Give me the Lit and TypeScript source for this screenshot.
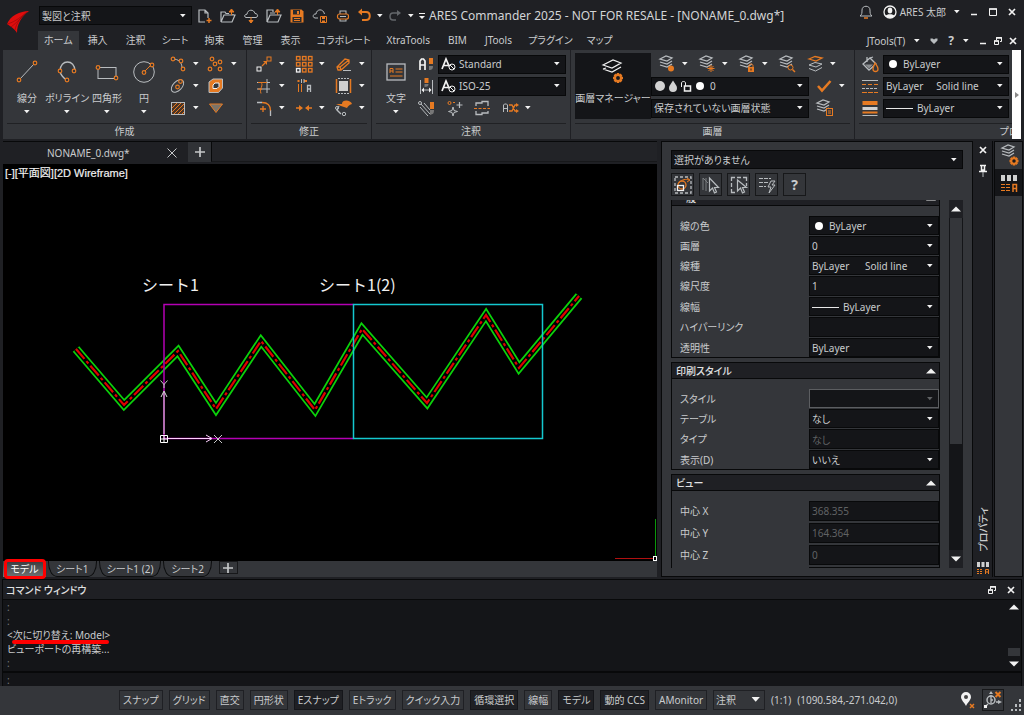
import { LitElement, html, svg, css, nothing, TemplateResult, SVGTemplateResult } from "lit";
import { customElement } from "lit/decorators.js";
import { classMap } from "lit/directives/class-map.js";

/* ---------- icon set: [width, height, shapes] ---------- */
const G = "#b8bcbf";
const O = "#e67a22";
const W = "#f2f2f2";
const D = "#34363a";

type Icon = [number, number, SVGTemplateResult];

const sheets = (x: number, y: number, top = G) => svg`
  <path d="M${x} ${y + 3}l6 -3 6 2 -5 3z" fill="none" stroke=${top} stroke-width="1.200" />
  <path d="M${x} ${y + 6}l7 2 5 -3M${x} ${y + 9}l7 2 5 -3" fill="none" stroke=${G} stroke-width="1.200" />
`;
const gear = (x: number, y: number, r: number) => svg`
  <path d="M${x} ${y - r}v${2 * r}M${x - r} ${y}h${2 * r}M${x - r * 0.7} ${y - r * 0.7}l${r * 1.4} ${r * 1.4}M${x + r * 0.7} ${y - r * 0.7}l${-r * 1.4} ${r * 1.4}" stroke=${O} stroke-width="2.500" />
  <circle cx=${x} cy=${y} r=${r - 1} fill=${O} />
  <circle cx=${x} cy=${y} r=${r / 2.6} fill="#1a1b1e" />
`;
const dot = (x: number, y: number) => svg`<circle cx=${x} cy=${y} r="1.800" fill=${D} stroke=${O} stroke-width="1.200" />`;

const icons: Record<string, Icon> = {
  logo: [24, 26, svg`<path d="M23 1C14 1 4 6 1 14c3 2 8 5 10 9 0-9 4-16 12-22z" fill="#e00d0d"/><path d="M1 14c5-1 12-5 20-12M5 17c4-3 9-8 15-14M9 20c1-5 4-11 10-16" stroke="#8c0a0a" fill="none" stroke-width=".6"/>`],
  newdoc: [16, 16, svg`<path d="M8 14H2V2h6l3 3v5M8 2v3h3" fill="none" stroke=${G} stroke-width="1.200"/><path d="M12 10v5M9.500 12.500h5" stroke=${O} stroke-width="1.500"/>`],
  open: [16, 16, svg`<path d="M1 14V4h4l1 1.500h3M1 14h11l3-7H4L1 14M13 7v-1" fill="none" stroke=${G} stroke-width="1.200"/><path d="M11.500 7V2M9 4l2.500-3L14 4z" stroke=${O} fill=${O}/>`],
  cloud: [16, 16, svg`<path d="M3 9.500C1 9 1 6.500 4 6.200 4.500 1 11 1 12 5.500c3 0 3.500 3.500 1 4z" fill="none" stroke=${G}/><path d="M8 9v6M6 12.500l2 2.500 2-2.500z" stroke=${O} fill=${O}/>`],
  openproj: [16, 16, svg`<path d="M1 14V2h6v2M1 14h11l3-7H4L1 14M4 5h5" fill="none" stroke=${G} stroke-width="1.200"/><path d="M11.500 7V2M9 4l2.500-3L14 4z" stroke=${O} fill=${O}/>`],
  save: [16, 16, svg`<path d="M1.500 1.500h11l2 2v11h-13z" fill=${O}/><path d="M4 2h7v4.500H4zM3.500 9h9v5h-9z" fill="#2a2b2e"/><path d="M8 3h2v3H8z" fill=${O}/><path d="M5 10.500h6M5 12.500h6" stroke=${O}/>`],
  cloudsave: [16, 16, svg`<path d="M6 10H3C0 9.500 1 5.500 4 6 4.500 1 11 0 12.500 6" fill="none" stroke=${G}/><path d="M8.500 8.500h6v6h-6z" fill="none" stroke=${O}/><path d="M10 9h3v2h-3zM10 12.500h3v2h-3z" fill=${O}/>`],
  globe: [16, 16, svg`<rect x="5" y="3" width="6" height="10" fill="none" stroke=${G}/><rect x="2.500" y="6" width="11" height="5" rx="2" fill="#222428" stroke=${O} stroke-width="1.200"/><path d="M5 8.500h6" stroke=${G}/>`],
  undo: [16, 16, svg`<path d="M5 4h5c5 0 5 8 0 8H6" fill="none" stroke=${O} stroke-width="2"/><path d="M2 4l4-3.500v7z" fill=${O}/>`],
  redo: [16, 16, svg`<path d="M11 5H6C2 5 2 12 6 12h3" fill="none" stroke="#63666a" stroke-width="1.500"/><path d="M14 5l-4-3v6z" fill="#63666a"/>`],
  customise: [8, 8, svg`<path d="M1 1.500h6" stroke=${W}/><path d="M1 4h6L4 7z" fill=${W}/>`],
  bell: [16, 16, svg`<path d="M2 12c2-1.500 2-3 2-6 0-5 8-5 8 0 0 3 0 4.500 2 6z" fill="none" stroke=${G}/><path d="M6 14h4" stroke=${O} stroke-width="1.500"/>`],
  user: [14, 14, svg`<circle cx="7" cy="7" r="6" fill="#1b1c1f" stroke=${W} stroke-width="1.300"/><ellipse cx="7" cy="5.500" rx="2.300" ry="3" fill=${W}/><path d="M2.500 11c1-2.500 8-2.500 9 0-2 2.500-7 2.500-9 0z" fill=${W}/>`],
  min: [10, 10, svg`<path d="M2 7.500h6" stroke=${W} stroke-width="1.500"/>`],
  max: [10, 10, svg`<path d="M1.500 2v6.500h7V2z" fill="none" stroke=${W}/><path d="M1 2h8" stroke=${W} stroke-width="1.500"/>`],
  close: [10, 10, svg`<path d="M2 2l6 6M8 2l-6 6" stroke=${W} stroke-width="1.700"/>`],
  restore: [10, 10, svg`<path d="M1.500 5v3.500h4V5zM3.500 4V1.500h5V5.500H7" fill="none" stroke=${W}/><path d="M1 5h5M3 2h6" stroke=${W} stroke-width="1.500"/>`],
  heart: [10, 8, svg`<path d="M1.500 1.500h2L5 2.500l1.500-1h2v2L5 7 1.500 3.500z" fill=${G}/>`],
  line: [26, 28, svg`<path d="M6 21L20 6" stroke=${G}/>${dot(5, 22)}${dot(21, 5)}`],
  polyline: [26, 28, svg`<path d="M6 13c0-12 15-12 15 0M6 13c0 3 4 8 7 9" fill="none" stroke=${G} stroke-width="1.300"/>${dot(6, 13)}${dot(20, 13)}${dot(13, 22)}`],
  rectangle: [26, 28, svg`<rect x="4" y="9.500" width="18" height="11" fill="none" stroke=${G}/>${dot(4, 9.5)}${dot(22, 20)}`],
  circle: [26, 28, svg`<circle cx="13" cy="14" r="10.300" fill="none" stroke=${G}/><path d="M13 14l7-7" stroke=${O}/>${dot(13, 14.5)}${dot(21, 7)}`],
  arc: [20, 18, svg`<path d="M5 4c5 0 9 3 9 9" fill="none" stroke=${G}/>${dot(5, 4)}${dot(13, 6)}${dot(15, 14)}`],
  points: [20, 18, svg`${dot(6, 4)}${dot(14, 7)}${dot(9, 9)}${dot(4, 14)}${dot(14, 14)}`],
  ellipse: [20, 18, svg`<ellipse cx="9.500" cy="9" rx="7.500" ry="4.500" transform="rotate(-45 9.500 9)" fill="none" stroke=${G}/>${dot(9.5, 10)}${dot(12.5, 4.5)}`],
  region: [20, 18, svg`<path d="M3 15.500V5l4-3h9.500v9l-4 4.500z" fill=${O} stroke=${G}/><path d="M7 11.500V8l2-2h4v3.500l-2 2z" fill="${D}" stroke=${W}/>`],
  hatch: [20, 18, svg`<rect x="3.500" y="3.500" width="13" height="12" fill="#4b3425" stroke=${G}/><path d="M4 9l5-5M4 13l9-9M6 15L16 5M10 15l6-6M14 15l2-2" stroke=${O}/>`],
  triangle: [20, 18, svg`<path d="M3.500 5h13L10 13.500z" fill="#7c7468" stroke=${O}/>`],
  move: [20, 18, svg`<rect x="3" y="12" width="4" height="4" fill="none" stroke=${W}/><rect x="13" y="2" width="4" height="4" fill="none" stroke=${O}/><path d="M8 11l3-3" stroke=${O} stroke-width="1.300"/><path d="M13 6v4L9 6z" fill=${O}/>`],
  pattern: [20, 18, svg`${[0, 1, 2].map((r) => [0, 1, 2].map((c) => svg`<rect x=${2.5 + c * 6} y=${1.5 + r * 6} width="3.500" height="3.500" fill="none" stroke=${r === 2 && c === 0 ? W : O} stroke-width="1.300"/>`))}`],
  eraser: [20, 18, svg`<path d="M3 12l8-8 4 1v3l-8 7H4zM7 15l-1-3-3 0M6 12l9-7" fill="none" stroke=${O} stroke-width="1.300"/><path d="M9 15.500h8" stroke=${G}/>`],
  trim: [20, 18, svg`<path d="M3 5.500h13M3 12h13M13 2v14" stroke=${G} fill="none"/><path d="M4 5.500h9M7 5.500c3 3-2 6 0 11M4 12h4" stroke=${O} fill="none"/>`],
  stretchA: [20, 18, svg`<path d="M3.500 4h2M10 4h3" stroke=${O} stroke-width="2"/><path d="M7.500 2v4M10 2v4" stroke=${G}/><path d="M4.500 7v8M7.500 7v8" stroke=${O}/><path d="M13.500 15V8.500h3V15M13.500 12h3" stroke=${G} fill="none" stroke-width="1.300"/>`],
  scale: [20, 18, svg`<rect x="5" y="4" width="9" height="10" fill="#cfcfcf"/><path d="M2.500 2v14M16.500 2v14" stroke=${O} stroke-width="1.500"/><path d="M4 1.500h11M4 16.500h11" stroke=${G} stroke-dasharray="2 1"/>`],
  fillet: [20, 18, svg`<path d="M3 3.500h5M16.500 11v6" stroke=${G} fill="none" stroke-width="1.300"/><path d="M8 3.500c6 0 8.500 3 8.500 8M9 7v6M6 10h6" stroke=${O} fill="none" stroke-width="1.300"/>`],
  join: [20, 18, svg`<path d="M2 9h5M18 9h-5" stroke=${O} stroke-width="1.500"/><path d="M5 6l4 3-4 3zM15 6l-4 3 4 3z" fill=${O}/>`],
  explode: [20, 18, svg`<path d="M8 5c0-5 9-4 10 0-3 1-4 2-5 4L7 7 2 5z" fill=${O}/><path d="M5 7l-2 4 4 4" fill="none" stroke=${G} stroke-width="1.300"/><circle cx="10" cy="15" r="1.700" fill="none" stroke=${G}/><circle cx="3" cy="9" r="1.500" fill="none" stroke=${G}/>`],
  text: [22, 22, svg`<rect x="2" y="3" width="18" height="16" fill="none" stroke=${G} stroke-width="1.300"/><path d="M5 12V7.500h3V12M5 10h3M10.500 8h7M10.500 11h7M5 15h12.500" stroke=${O} fill="none"/>`],
  textstyle: [20, 18, svg`<path d="M4 15V6l1.500-2h2L9 6v9M4 10h5" stroke=${W} fill="none" stroke-width="1.700"/><rect x="13" y="3" width="4" height="6" fill=${O}/><path d="M13 11h4c0 3-1 4-4 4z" fill="#777"/>`],
  dimstyle: [20, 18, svg`<path d="M4.500 3v14M16.500 3v14M7 13h7" stroke=${G} fill="none"/><path d="M8 10.500L5.500 13 8 15.500zM13 10.500l2.500 2.500-2.500 2.500z" fill=${W}/><rect x="8.500" y="1" width="4" height="5" fill=${O}/><path d="M8.500 7h4c0 2-1 3-4 3z" fill="#777"/>`],
  mlstyle: [20, 18, svg`<path d="M5 5l9 10M8 4l6 7M4 8l8 9" stroke=${G}/><circle cx="4" cy="4" r="1.500" fill="none" stroke=${G}/><rect x="14" y="3" width="4" height="7" fill=${O}/><path d="M14 11h4c0 4-1 4-4 5z" fill="#777"/>`],
  spark: [20, 18, svg`<circle cx="5.500" cy="4" r="1.500" fill="none" stroke=${O}/><path d="M9 3.500h2" stroke=${O}/><path d="M12.500 6h6M15.500 3v6" stroke=${G} stroke-width="1.200"/><path d="M9 8l1 3.500 3.500 1-3.500 1-1 3.500-1-3.500-3.500-1 3.500-1z" fill=${D} stroke=${G}/>`],
  section: [20, 18, svg`<path d="M4 7V4h6V2.500h6V7M4 12v3.500h6V14h6v-2" fill="none" stroke=${G} stroke-width="1.300"/><path d="M2 9.500h16" stroke=${O} stroke-dasharray="3 1.500"/>`],
  retext: [20, 18, svg`<path d="M3.500 13V6l1-1h2l1 1v7M3.500 9.500h4" stroke=${G} fill="none"/><path d="M9 6h3l3 6h2M9 12h3l3-6h2" stroke=${O} fill="none" stroke-width="1.300"/><path d="M16 4v4l3-2zM16 10v4l3-2z" fill=${O}/>`],
  abar: [15, 14, svg`<path d="M1 12L5 2l3.500 8M3 8.500h4" stroke=${W} fill="none" stroke-width="1.700"/><circle cx="11" cy="10" r="3" fill="#141518" stroke=${W}/><path d="M9 8l4 4" stroke=${W}/>`],
  layermgr: [26, 30, svg`<path d="M3 8l10-5 8 3-9 5zM3 12l9 3 9-5M3 12l3-1" fill="none" stroke=${W} stroke-width="1.200"/>${gear(18, 21, 5)}`],
  laygear: [26, 26, svg`${sheets(6, 2)}${gear(18, 18, 4.5)}`],
  laydot: [20, 18, svg`${sheets(3, 1)}<circle cx="14" cy="13.500" r="3" fill=${O}/>`],
  laysun: [20, 18, svg`${sheets(3, 1)}<path d="M14 10v7M10.500 13.500h7M11.500 11l5 5M16.500 11l-5 5" stroke=${O}/>`],
  laylock: [20, 18, svg`${sheets(3, 1)}<path d="M12 13v-2.500c0-2 4-2 4 0V13" fill="none" stroke=${O}/><rect x="11" y="12" width="6" height="5" fill=${O}/><path d="M14 13.500v2" stroke="#222"/>`],
  laysearch: [20, 18, svg`${sheets(3, 1)}<circle cx="13.500" cy="12.500" r="2.500" fill=${D} stroke=${O}/><path d="M15.500 14.500L18 17" stroke=${O} stroke-width="1.500"/>`],
  layiso: [20, 18, svg`<path d="M4 4l6-2.500 7 1.500-6 3z" fill=${D} stroke=${O} stroke-width="1.300"/><path d="M4 10l6-2.500 7 1.500-6 3zM4 13.500l6.500 2.500 6.500-3.500" fill="none" stroke=${G}/>`],
  laystate: [20, 18, svg`${sheets(3, 1)}<rect x="12.500" y="9.500" width="6" height="7" fill=${D} stroke=${O}/><path d="M14 12h3M14 14h3" stroke=${O}/>`],
  check: [18, 16, svg`<path d="M3 8l4 4.500L15.500 3" fill="none" stroke=${O} stroke-width="2.500"/>`],
  bullet: [14, 12, svg`<circle cx="7" cy="6" r="4" fill="#fff"/>`],
  bulletgrey: [12, 12, svg`<circle cx="6" cy="6" r="5" fill="#d2d2d2"/>`],
  drop: [12, 12, svg`<path d="M6 .5C8 4 10 5.500 10 8a4 4 0 0 1-8 0c0-2.500 2-4 4-7.500z" fill="#d2d2d2"/>`],
  unlock: [12, 12, svg`<path d="M1.500 7V3c0-2 4-2 4 0v3" fill="none" stroke=${W}/><rect x="4.500" y="6" width="6" height="5" fill="none" stroke=${W} stroke-width="1.500"/>`],
  bucket: [20, 18, svg`<path d="M3 9l7-6 6 6-7 6zM7 2v5M10 3l3-1" fill="none" stroke=${G} stroke-width="1.300"/><path d="M5 9.500h8l-4 4z" fill="#8c8f92"/><path d="M15 8c2 3 3 4 3 6a2.500 2.500 0 0 1-5 0c0-2 1-3 2-6z" fill=${D} stroke=${O} stroke-width="1.300"/>`],
  linetype: [20, 18, svg`<path d="M2 3.500h16" stroke=${G}/><path d="M2 7.500h16" stroke=${O} stroke-dasharray="4 2"/><path d="M2 11.500h16" stroke=${G} stroke-dasharray="3 1"/><path d="M2 15.500h16" stroke=${O} stroke-dasharray="5 1"/>`],
  lineweight: [20, 18, svg`<rect x="2.500" y="2" width="15" height="4" fill=${O}/><rect x="2.500" y="8" width="15" height="3" fill="#d0d0d0"/><rect x="2.500" y="12.500" width="15" height="2" fill=${O}/><path d="M2.500 16.500h15" stroke=${G}/>`],
  dash: [28, 4, svg`<path d="M0 2.500h27" stroke="#e8e8e8"/>`],
  x: [12, 12, svg`<path d="M1.500 1.500l9 9M10.500 1.500l-9 9" stroke="#c5c7c9"/>`],
  plus: [12, 12, svg`<path d="M6 1v10M1 6h10" stroke="#c5c7c9" stroke-width="1.700"/>`],
  selcycle: [20, 20, svg`<rect x="2" y="2" width="16" height="16" fill="none" stroke=${G} stroke-width="1.300" stroke-dasharray="3 2"/><circle cx="9" cy="10" r="4" fill="none" stroke=${O} stroke-width="1.300"/><path d="M6 8c3-4 7-4 10-3M14 3l3 2-3 2" stroke=${O} fill="none"/><rect x="4.500" y="10.500" width="6" height="5" fill="none" stroke=${W} stroke-width="1.300"/>`],
  selall: [20, 20, svg`<path d="M2 3v12M5 3v13M2 3l5 5" stroke="#7b7e81" fill="none"/><path d="M8.500 3v13l3-3 2 5 2-1-2-4.500h4z" fill=${D} stroke=${G} stroke-width="1.200"/>`],
  selbox: [20, 20, svg`<path d="M6 2.500H2.500V6M2.500 8v4M2.500 14v3.500H6M8 2.500h4M14 2.500h3.500V6M17.500 8v3" fill="none" stroke=${G} stroke-width="1.300"/><path d="M8.500 5v11l3-3 2 5 2-1-2-4.500h4z" fill=${D} stroke=${G} stroke-width="1.200"/>`],
  selquick: [20, 20, svg`<path d="M2 3.500h12M2 7.500h9M2 11.500h7" stroke=${G} stroke-dasharray="4 1" stroke-width="1.200"/><path d="M14 6l-3 6h3l-2 6 6-8h-3l3-4z" fill="none" stroke=${G}/>`],
  pin: [12, 14, svg`<path d="M3 1.500h6M4.500 2v4h3V2M2 7.500h8" stroke=${W} stroke-width="1.500" fill="none"/><path d="M6 8v5" stroke=${G}/>`],
  propbar: [20, 20, svg`<rect x="2" y="2" width="4" height="6" fill="#cfcfcf"/><rect x="8" y="2" width="4" height="6" fill="#cfcfcf"/><rect x="14" y="2" width="4" height="6" fill="#cfcfcf"/><path d="M2 11.500h9M2 14.500h9M2 17.500h9" stroke=${O} stroke-dasharray="4 1"/><path d="M14 19v-7.500h3.500V19M14 15.500h3.500" fill="none" stroke=${O} stroke-width="1.500"/>`],
  propmini: [14, 14, svg`<path d="M1 1h3v5H1zM5.500 1h3v5h-3zM10 1h3v5h-3z" fill="#cfcfcf"/><path d="M1 8.500h6M1 10.500h6M1 12.500h6" stroke=${O} stroke-dasharray="2 1"/><path d="M9.500 13V8.500h3V13M9.500 11h3" fill="none" stroke=${O}/>`],
  up: [10, 6, svg`<path d="M0 5.500L5 .5l5 5z" fill=${W}/>`],
  down: [10, 6, svg`<path d="M0 .5l5 5 5-5z" fill=${W}/>`],
  chev: [4, 6, svg`<path d="M0 0l4 3-4 3z" fill="#8a8a8a"/>`],
  geo: [18, 18, svg`<path d="M8 1a5 5 0 0 1 5 5c0 3-3 5-5 9-2-4-5-6-5-9a5 5 0 0 1 5-5z" fill=${W}/><circle cx="8" cy="6" r="2" fill="#444"/><path d="M12 13l4 4M16 13l-4 4" stroke=${O} stroke-width="1.500"/>`],
  ccs: [20, 20, svg`<circle cx="8" cy="10" r="4" fill="none" stroke=${G} stroke-width="1.500"/><path d="M8 5v8M8 10h2M13 12h4M5 14l-2 2" stroke=${G} stroke-width="1.300"/><path d="M6 4l2-3 2 3zM15 10l4 2-4 2z" fill=${G}/><rect x="1" y="15" width="3" height="3" fill=${W}/><path d="M12.500 2l5 5M17.500 2l-5 5" stroke=${O} stroke-width="2"/>`],
  grip: [12, 12, svg`<path d="M10 0v3M10 5v3M10 10v2M6 5v3M6 10v2M2 10v2" stroke=${G} stroke-width="2"/>`],
};

const icon = (name: string) => {
  const [w, h, shapes] = icons[name];
  return html`<svg class="icon" width=${w} height=${h} viewBox="0 0 ${w} ${h}" aria-hidden="true">${shapes}</svg>`;
};
const caret = html`<svg class="caret" width="6" height="4" viewBox="0 0 6 4" aria-hidden="true"><path d="M0 0h5.600L2.800 3.200z" fill="currentColor"/></svg>`;

/* ---------- data ---------- */
const menuTabs = ["ホーム", "挿入", "注釈", "シート", "拘束", "管理", "表示", "コラボレート", "XtraTools", "BIM", "JTools", "プラグイン", "マップ"];
const quickTools: [string, string][] = [["newdoc", "新規"], ["open", "開く"], ["cloud", "クラウド"], ["openproj", "プロジェクト"], ["save", "保存"], ["cloudsave", "クラウド保存"], ["globe", "印刷"]];
const sheetTabs = ["シート1", "シート1 (2)", "シート2"];
const statusButtons: [string, boolean][] = [
  ["スナップ", false], ["グリッド", false], ["直交", false], ["円形状", false], ["Eスナップ", true], ["Eトラック", false],
  ["クイック入力", false], ["循環選択", true], ["線幅", false], ["モデル", true], ["動的 CCS", true], ["AMonitor", false],
];
const path: [number, number][] = [[73, 185], [121, 241], [175, 187], [213, 245], [258, 177], [312, 246], [359, 165], [424, 239], [483, 151], [516, 204], [576, 132]];

interface Row {
  label: string;
  value: string;
  kind: "select" | "input";
  lead?: string;
  disabled?: boolean;
}
interface Section {
  title: string;
  rows: Row[];
  roomy?: boolean;
}
const sections: Section[] = [
  {
    title: "一般",
    rows: [
      { label: "線の色", value: "ByLayer", kind: "select", lead: "bullet" },
      { label: "画層", value: "0", kind: "select" },
      { label: "線種", value: "ByLayer\u00a0\u00a0\u00a0\u00a0\u00a0\u00a0Solid line", kind: "select" },
      { label: "線尺度", value: "1", kind: "input" },
      { label: "線幅", value: "ByLayer", kind: "select", lead: "dash" },
      { label: "ハイパーリンク", value: "", kind: "input" },
      { label: "透明性", value: "ByLayer", kind: "select" },
    ],
  },
  {
    title: "印刷スタイル",
    rows: [
      { label: "スタイル", value: "", kind: "select", disabled: true },
      { label: "テーブル", value: "なし", kind: "select" },
      { label: "タイプ", value: "なし", kind: "input", disabled: true },
      { label: "表示(D)", value: "いいえ", kind: "select" },
    ],
  },
  {
    title: "ビュー",
    roomy: true,
    rows: [
      { label: "中心 X", value: "368.355", kind: "input", disabled: true },
      { label: "中心 Y", value: "164.364", kind: "input", disabled: true },
      { label: "中心 Z", value: "0", kind: "input", disabled: true },
      { label: "", value: "", kind: "input", disabled: true },
    ],
  },
];

@customElement("app-root")
export class AppRoot extends LitElement {
  static styles = css`
    :host {
      display: flex;
      flex-direction: column;
      height: 100vh;
      overflow: hidden;
      background: #1f2024;
      color: #c9cbcd;
      font: 10px/14px "Noto Sans", "Noto Sans CJK JP", sans-serif;
      font-feature-settings: "palt";
      --ribbon: #34363a;
      --bar: #1f2024;
      --field: #141518;
      --edge: #08090a;
    }
    * { box-sizing: border-box; }
    button, select, input {
      font: inherit;
      font-feature-settings: inherit;
      color: inherit;
      background: none;
      border: 0;
      padding: 0;
      margin: 0;
      min-width: 0;
    }
    a { color: inherit; text-decoration: none; }
    .icon, .caret { display: block; flex: none; }
    .caret { color: #f2f2f2; }

    /* title and menu */
    .top { display: grid; grid-template-columns: 38px 1fr; height: 50px; flex: none; }
    .logo { padding: 10px 0 0 6px; }
    .title { display: flex; align-items: center; height: 31px; padding: 0 3px 0 1px; }
    .workspace { width: 153px; margin-right: 1px; }
    .quick { display: flex; align-items: center; }
    .quick button { width: 23px; height: 22px; display: flex; align-items: center; justify-content: center; }
    .quick button.step { width: 20px; }
    .quick button.slim { width: 11px; }
    .doc { font-size: 12px; line-height: 18px; font-weight: 400; margin: 0 0 0 2px; color: #d2d4d6; white-space: nowrap; flex: 1; }
    .account { display: flex; align-items: center; align-self: flex-start; height: 24px; }
    .account .user { display: flex; align-items: center; gap: 3px; margin: 0 4px 0 9px; }
    .account .user .caret { margin-left: 5px; }
    .account .win { width: 19px; height: 20px; display: flex; align-items: center; justify-content: center; }
    .menu { display: flex; height: 19px; align-items: stretch; padding-right: 6px; }
    .menu a { padding: 2px 9px 0; white-space: nowrap; }
    .menu a.on { background: var(--ribbon); padding: 2px 6px 0; }
    .menu a.kana { padding: 2px 7px 0; }
    .menu .extra { margin-left: auto; display: flex; align-items: center; gap: 9px; }
    .menu .extra button { display: flex; align-items: center; gap: 9px; }
    .menu .help { font-weight: 700; font-size: 12px; }
    .menu .mdi { display: flex; gap: 5px; }

    /* ribbon */
    .ribbon { display: flex; height: 89px; flex: none; margin: 0 3px; background: var(--ribbon); }
    .panel { display: flex; flex-direction: column; padding: 3px 4px 0; border-right: 1px solid #1f2024; flex: none; }
    .panel .body { display: flex; height: 70px; }
    .panel h2 { margin: 0; border-top: 1px solid #202124; font-size: 10px; line-height: 15px; font-weight: 400; text-align: center; }
    .panel.last { flex: 1; min-width: 0; overflow: hidden; border: 0; padding: 3px 3px 0 4px; }
    .panel.last h2 { width: 326px; }
    .big { width: 40px; height: 66px; display: flex; flex-direction: column; align-items: center; white-space: nowrap; }
    .big .pic { height: 38px; display: flex; align-items: center; }
    .big .caret { margin-top: 5px; }
    .big.slim { width: 34px; }
    .big.dark { background: var(--field); width: 76px; }
    .tools { display: grid; grid-auto-rows: 22px; align-content: start; }
    .tools.create { grid-template-columns: 38px 38px; margin-left: 5px; }
    .tools.modify { grid-template-columns: 40px 40px 35px; padding-left: 1px; }
    .cell { display: flex; align-items: center; }
    .cell button { width: 24px; height: 22px; display: flex; align-items: center; justify-content: center; }
    .cell .caret { margin-left: 3px; }
    .notes { display: grid; grid-template-columns: 24px 128px; grid-auto-rows: 22px; align-items: center; margin-left: -2px; }
    .layers { display: grid; grid-template-columns: 158px 38px; grid-auto-rows: 22px; align-items: center; column-gap: 3px; }
    .layers .wide { grid-column: 1 / 3; }
    .row { display: flex; align-items: center; }
    .row .cell { width: 40px; padding-left: 4px; }
    .row .cell.narrow { width: 28px; }
    .props { flex: 1; display: grid; grid-template-columns: 24px minmax(0, 1fr); grid-auto-rows: 22px; align-items: center; }
    .props > .icon { margin-left: 1px; }
    .more { width: 9px; background: #fff; display: flex; align-items: center; justify-content: center; }

    /* fields */
    .field { display: flex; align-items: center; height: 19px; background: var(--field); border: 1px solid var(--edge); padding: 0 2px; min-width: 0; gap: 1px; }
    .field select, .field input { flex: 1; height: 17px; appearance: none; outline: none; width: 20px; }
    .field .icon + select { padding-left: 2px; }
    .field .caret { margin: 0 3px 0 -10px; pointer-events: none; }
    .field.status { width: 52px; height: 20px; background: none; border-color: #1f2024; }
    .field.status .caret { transform: scale(1.500); }

    /* work area */
    .work { flex: 1; min-height: 0; display: flex; margin-top: 2px; }
    .drawing { flex: 1; min-width: 0; display: flex; flex-direction: column; margin: 0 3px; }
    .docs { display: flex; height: 23px; flex: none; border-top: 1px solid var(--edge); }
    .docs .tab { width: 185px; display: flex; align-items: center; padding: 0 10px 0 44px; justify-content: space-between; }
    .docs .add { width: 23px; background: #303236; display: flex; align-items: center; justify-content: center; height: 20px; }
    .docs .rest { flex: 1; border-left: 1px solid var(--edge); border-bottom: 1px solid #17181a; background: #222327; height: 20px; }
    .canvas { position: relative; flex: 1; min-height: 0; background: #000; }
    .scene { display: block; width: 100%; height: 100%; }
    .scene text { font-feature-settings: normal; }
    .corner { position: absolute; right: 0; bottom: 0; display: block; }
    .sheets { display: flex; height: 16px; flex: none; background: var(--ribbon); align-items: stretch; }
    .sheets .model { position: relative; width: 43px; text-align: center; color: #fff; background: linear-gradient(#3a3b3e, #707274); }
    .sheets .model::after { content: ""; position: absolute; inset: -2px 0 -2px 1px; border: 3px solid #f00; border-radius: 4px; }
    .sheets .sheet { border: solid #0c0d0e; border-width: 0 1px 1px; border-radius: 0 0 9px 9px / 0 0 15px 15px; padding: 0 7px; margin-left: 2px; white-space: nowrap; }
    .sheets .new { display: flex; align-items: center; justify-content: center; width: 19px; height: 13px; margin-left: 7px; border: 1px solid #17181a; }

    /* properties */
    .properties { width: 312px; flex: none; background: var(--ribbon); border: 1px solid var(--edge); display: flex; flex-direction: column; padding: 8px 9px; margin-left: 1px; }
    .picks { display: flex; gap: 5px; margin: 4px 0 4px; }
    .picks button { width: 23px; height: 23px; border: 1px solid #17181a; display: flex; align-items: center; justify-content: center; font-weight: 700; font-size: 14px; }
    .listing { flex: 1; min-height: 0; display: flex; justify-content: space-between; }
    .scroll { width: 269px; overflow: auto; scrollbar-width: none; }
    .section { border: 1px solid var(--edge); margin-bottom: 4px; }
    .section h3 { margin: 0; height: 16px; display: flex; align-items: center; justify-content: space-between; background: var(--bar); border-bottom: 1px solid var(--edge); padding: 0 3px 0 4px; font-size: 10px; font-weight: 500; color: #e0e1e2; }
    .rows { display: grid; grid-template-columns: 1fr 130px; row-gap: 1px; padding: 10px 0 0 8px; align-items: center; }
    .rows.roomy { row-gap: 2px; }
    .rows .field { height: 19px; }
    .rows .field.text { height: 20px; }
    .rows .field.off { color: #606264; }
    .rows .field.off .caret { color: #606264; }
    .rows .field.framed { border-color: #5c5e61; }
    .lane { width: 14px; background: var(--field); display: flex; flex-direction: column; align-items: center; }
    .lane .end { height: 18px; display: flex; align-items: center; background: var(--bar); width: 14px; justify-content: center; }
    .lane .thumb { width: 12px; background: var(--ribbon); flex: 68; }
    .lane .rest { flex: 32; }
    .spine { width: 20px; flex: none; background: var(--bar); display: flex; flex-direction: column; align-items: center; gap: 9px; padding: 4px 0 2px; border-right: 1px solid var(--edge); }
    .spine span { margin-top: auto; writing-mode: vertical-rl; text-orientation: sideways; transform: rotate(180deg); font-weight: 500; }
    .dock { width: 29px; flex: none; background: var(--ribbon); border: 1px solid var(--edge); margin: 0 1px 0 1px; }
    .dock button { display: flex; width: 27px; height: 27px; align-items: center; justify-content: center; }
    .dock button.on { background: var(--field); }

    /* command window */
    .command { flex: none; margin: 2px 2px 0; border: 1px solid var(--edge); background: var(--field); border-bottom: 0; }
    .command h2 { display: flex; align-items: center; margin: 0; height: 20px; padding: 0 5px 0 3px; gap: 9px; font-size: 10px; font-weight: 500; color: #e0e1e2; background: var(--bar); border-bottom: 1px solid var(--edge); }
    .command h2 span { flex: 1; }
    .output { display: flex; height: 73px; border-bottom: 2px solid var(--edge); }
    .lines { flex: 1; padding: 0 4px; }
    .lines p { margin: 0; }
    .lines .mark { color: #77797b; }
    .lines .noted { position: relative; display: inline-block; }
    .lines .noted::after { content: ""; position: absolute; left: 5px; right: 1px; bottom: -2px; height: 4px; border-radius: 2px; background: #f00; }
    .feed { width: 14px; display: flex; flex-direction: column; align-items: center; padding: 4px 0; }
    .feed .thumb { width: 12px; height: 8px; margin: auto 0 5px; background: var(--ribbon); }
    .prompt { display: flex; height: 13px; padding: 0 4px; align-items: center; color: #77797b; }
    .prompt input { flex: 1; height: 12px; outline: none; }

    /* status */
    .status-bar { flex: none; height: 29px; background: var(--ribbon); display: flex; align-items: center; gap: 6px; padding: 0 2px 2px 119px; white-space: nowrap; }
    .status-bar .toggle { height: 20px; padding: 0 3px; border: 1px solid #1f2024; }
    .status-bar .toggle.on { background: var(--bar); border-color: #15161a; }
    .status-bar .ends { margin-left: auto; display: flex; align-items: center; gap: 6px; }
    .status-bar .framed { border: 1px solid #17181a; }
    .status-bar .grip { align-self: flex-end; }
  `;

  firstUpdated() {
    const list = this.renderRoot.querySelector(".scroll");
    if (list) list.scrollTop = 11;
  }

  private pick(value: string, name: string, lead: string[] = [], cls = "") {
    return html`<div class="field ${cls}">
      ${lead.map(icon)}<select aria-label=${name}><option>${value}</option></select>${caret}
    </div>`;
  }

  private cell(name: string, drop = true, cls = "") {
    return html`<div class="cell ${cls}"><button aria-label=${name}>${icon(name)}</button>${drop ? caret : nothing}</div>`;
  }

  private big(name: string, label: string, cls = "", drop = true) {
    return html`<button class="big ${cls}"><span class="pic">${icon(name)}</span>${label}${drop ? caret : nothing}</button>`;
  }

  private panel(title: string, body: TemplateResult, cls = "") {
    return html`<section class="panel ${cls}"><div class="body">${body}</div><h2>${title}</h2></section>`;
  }

  private header() {
    return html`<header class="top">
      <div class="logo">${icon("logo")}</div>
      <div>
        <div class="title">
          <div class="workspace">${this.pick("製図と注釈", "ワークスペース")}</div>
          <div class="quick">
            ${quickTools.map(([n, l]) => html`<button aria-label=${l}>${icon(n)}</button>`)}
            <button class="step" aria-label="元に戻す">${icon("undo")}</button><button class="slim" aria-label="履歴">${caret}</button>
            <button class="step" aria-label="やり直し">${icon("redo")}</button><button class="slim" aria-label="履歴">${caret}</button>
            <button class="slim" aria-label="カスタマイズ">${icon("customise")}</button>
          </div>
          <h1 class="doc">ARES Commander 2025 - NOT FOR RESALE - [NONAME_0.dwg*]</h1>
          <div class="account">
            <button aria-label="通知">${icon("bell")}</button>
            <button class="user">${icon("user")}ARES 太郎 ${caret}</button>
            ${["min", "max", "close"].map((n) => html`<button class="win" aria-label=${n}>${icon(n)}</button>`)}
          </div>
        </div>
        <nav class="menu">
          ${menuTabs.map((t, i) => html`<a href="#" class=${classMap({ on: i === 0, kana: i > 0 && /^[ァ-ー]+$/.test(t) })}>${t}</a>`)}
          <div class="extra">
            <button>JTools(T) ${caret}</button>${icon("heart")}
            <button><span class="help">?</span>${caret}</button>
            <div class="mdi">${["min", "restore", "close"].map((n) => html`<button aria-label=${n}>${icon(n)}</button>`)}</div>
          </div>
        </nav>
      </div>
    </header>`;
  }

  private ribbon() {
    const create = html`
      ${this.big("line", "線分")}${this.big("polyline", "ポリライン")}${this.big("rectangle", "四角形")}${this.big("circle", "円", "slim")}
      <div class="tools create">
        ${this.cell("arc")}${this.cell("points")}${this.cell("ellipse")}${this.cell("region", false)}${this.cell("hatch")}${this.cell("triangle", false)}
      </div>`;
    const modify = html`<div class="tools modify">
      ${this.cell("move")}${this.cell("pattern")}${this.cell("eraser")}
      ${this.cell("trim")}${this.cell("stretchA", false)}${this.cell("scale")}
      ${this.cell("fillet")}${this.cell("join")}${this.cell("explode")}
    </div>`;
    const notes = html`
      ${this.big("text", "文字")}
      <div class="notes">
        ${this.cell("textstyle", false)}${this.pick("Standard", "文字スタイル", ["abar"])}
        ${this.cell("dimstyle", false)}${this.pick("ISO-25", "寸法スタイル", ["abar"])}
        ${this.cell("mlstyle", false)}
        <div class="row">${this.cell("spark", false, "narrow")}${this.cell("section", false, "narrow")}${this.cell("retext")}</div>
      </div>`;
    const layers = html`
      ${this.big("layermgr", "画層マネージャー", "dark", false)}
      <div class="layers">
        <div class="row wide">${this.cell("laydot")}${this.cell("laysun")}${this.cell("laylock")}${this.cell("laysearch", false, "narrow")}${this.cell("layiso")}</div>
        ${this.pick("0", "画層", ["bulletgrey", "drop", "unlock", "bullet"])}${this.cell("check")}
        ${this.pick("保存されていない画層状態", "画層状態")}${this.cell("laystate", false)}
      </div>`;
    const props = html`<div class="props">
      ${icon("bucket")}${this.pick("ByLayer", "線の色", ["bullet"])}
      ${icon("linetype")}${this.pick("ByLayer\u00a0\u00a0\u00a0\u00a0\u00a0Solid line", "線種")}
      ${icon("lineweight")}${this.pick("ByLayer", "線幅", ["dash"])}
    </div>`;
    return html`<div class="ribbon">
      ${this.panel("作成", create)}${this.panel("修正", modify)}${this.panel("注釈", notes)}${this.panel("画層", layers)}${this.panel("プロパティ", props, "last")}
      <button class="more" aria-label="次へ">${icon("chev")}</button>
    </div>`;
  }

  private scene() {
    const pts = path.map((p) => p.join(",")).join(" ");
    return html`
      <svg class="scene">
        <g fill="none">
          <polyline points=${pts} stroke="#0bd20b" stroke-width="8.500" stroke-miterlimit="8" />
          <polyline points=${pts} stroke="#000" stroke-width="5" stroke-miterlimit="8" />
          <polyline points=${pts} stroke="#e00000" stroke-width="2.200" stroke-dasharray="13 3 3 3" />
          <path d="M350.500 140.500H161V274.500H350.500" stroke="#b400b4" stroke-width="1.500" />
          <rect x="350.500" y="140.500" width="189" height="134" stroke="#14c8cf" stroke-width="1.500" />
          <path d="M161 270V228M158 233l3 -6 3 6" stroke="#d8d8d8" />
          <path d="M165 274.500h43M203 271l6 3.500-6 3.500" stroke="#ffd0ff" />
          <path d="M157.500 271.500h7v7h-7zM161 271v7M158 275h7" stroke="#fff" />
          <path d="M157.500 216.500l3.500 4 3.500-4M161 220v4M211 271l8 8M219 271l-8 8" stroke="#c8c8c8" />
        </g>
        <text x="2" y="13" fill="#f0f0f0" font-size="11" font-family="Liberation Sans, Noto Sans CJK JP, sans-serif" stroke="#f0f0f0" stroke-width=".2">[-][平面図][2D Wireframe]</text>
        <text x="139" y="127" fill="#f0f0f0" font-size="16" font-family="Noto Sans CJK JP, sans-serif">シート1</text>
        <text x="316" y="127" fill="#f0f0f0" font-size="16" font-family="Noto Sans CJK JP, sans-serif">シート1(2)</text>
      </svg>
      <svg class="corner" width="44" height="44" viewBox="0 0 44 44">
        <path d="M42.500 2v38" stroke="#0a960a" /><path d="M2 41.500h38" stroke="#b01010" />
        <rect x="40.500" y="39.500" width="3" height="4" fill="none" stroke="#fff" />
      </svg>`;
  }

  private propertyRow(row: Row, id: string) {
    const cls = classMap({ field: true, text: row.kind === "input", off: !!row.disabled, framed: !!row.disabled && row.kind === "select" });
    return html`<label for=${id}>${row.label}</label>
      <div class=${cls}>
        ${row.lead ? icon(row.lead) : nothing}
        ${row.kind === "select"
          ? html`<select id=${id}><option>${row.value}</option></select>${caret}`
          : html`<input id=${id} .value=${row.value} ?readonly=${!!row.disabled} />`}
      </div>`;
  }

  private properties() {
    return html`<aside class="properties">
        ${this.pick("選択がありません", "選択")}
        <div class="picks">
          ${["selcycle", "selall", "selbox", "selquick"].map((n) => html`<button aria-label=${n}>${icon(n)}</button>`)}
          <button aria-label="ヘルプ">?</button>
        </div>
        <div class="listing">
          <div class="scroll">
            ${sections.map((s, i) => html`<section class="section">
              <h3>${s.title}${icon("up")}</h3>
              <div class="rows ${s.roomy ? "roomy" : ""}">${s.rows.map((r, j) => this.propertyRow(r, `p${i}-${j}`))}</div>
            </section>`)}
          </div>
          <div class="lane"><div class="end">${icon("up")}</div><div class="thumb"></div><div class="rest"></div><div class="end">${icon("down")}</div></div>
        </div>
      </aside>
      <div class="spine">
        <button aria-label="閉じる">${icon("close")}</button>
        <button aria-label="固定">${icon("pin")}</button>
        <span>プロパティ</span>
        ${icon("propmini")}
      </div>
      <div class="dock">
        <button aria-label="画層マネージャー">${icon("laygear")}</button>
        <button class="on" aria-label="プロパティ">${icon("propbar")}</button>
      </div>`;
  }

  render() {
    return html`
      ${this.header()}${this.ribbon()}
      <main class="work">
        <div class="drawing">
          <div class="docs">
            <div class="tab"><span>NONAME_0.dwg*</span><button aria-label="閉じる">${icon("x")}</button></div>
            <button class="add" aria-label="新規図面">${icon("plus")}</button><div class="rest"></div>
          </div>
          <div class="canvas">${this.scene()}</div>
          <div class="sheets">
            <button class="model">モデル</button>
            ${sheetTabs.map((t) => html`<button class="sheet">${t}</button>`)}
            <button class="new" aria-label="新規シート">${icon("plus")}</button>
          </div>
        </div>
        ${this.properties()}
      </main>
      <section class="command">
        <h2><span>コマンド ウィンドウ</span><button aria-label="元のサイズ">${icon("restore")}</button><button aria-label="閉じる">${icon("close")}</button></h2>
        <div class="output">
          <div class="lines">
            <p class="mark">:</p><p class="mark">:</p>
            <p><span class="noted">&lt;次に切り替え: Model&gt;</span></p>
            <p>ビューポートの再構築...</p><p class="mark">:</p>
          </div>
          <div class="feed">${icon("up")}<div class="thumb"></div>${icon("down")}</div>
        </div>
        <div class="prompt"><label for="cmd">:</label><input id="cmd" /></div>
      </section>
      <footer class="status-bar">
        ${statusButtons.map(([t, on]) => html`<button class=${classMap({ toggle: true, on })}>${t}</button>`)}
        ${this.pick("注釈", "注釈尺度", [], "status")}
        <span>(1:1)</span><span>(1090.584,-271.042,0)</span>
        <div class="ends">
          <button aria-label="位置">${icon("geo")}</button>
          <button class="framed" aria-label="CCS">${icon("ccs")}</button>
          <span class="grip">${icon("grip")}</span>
        </div>
      </footer>`;
  }
}
